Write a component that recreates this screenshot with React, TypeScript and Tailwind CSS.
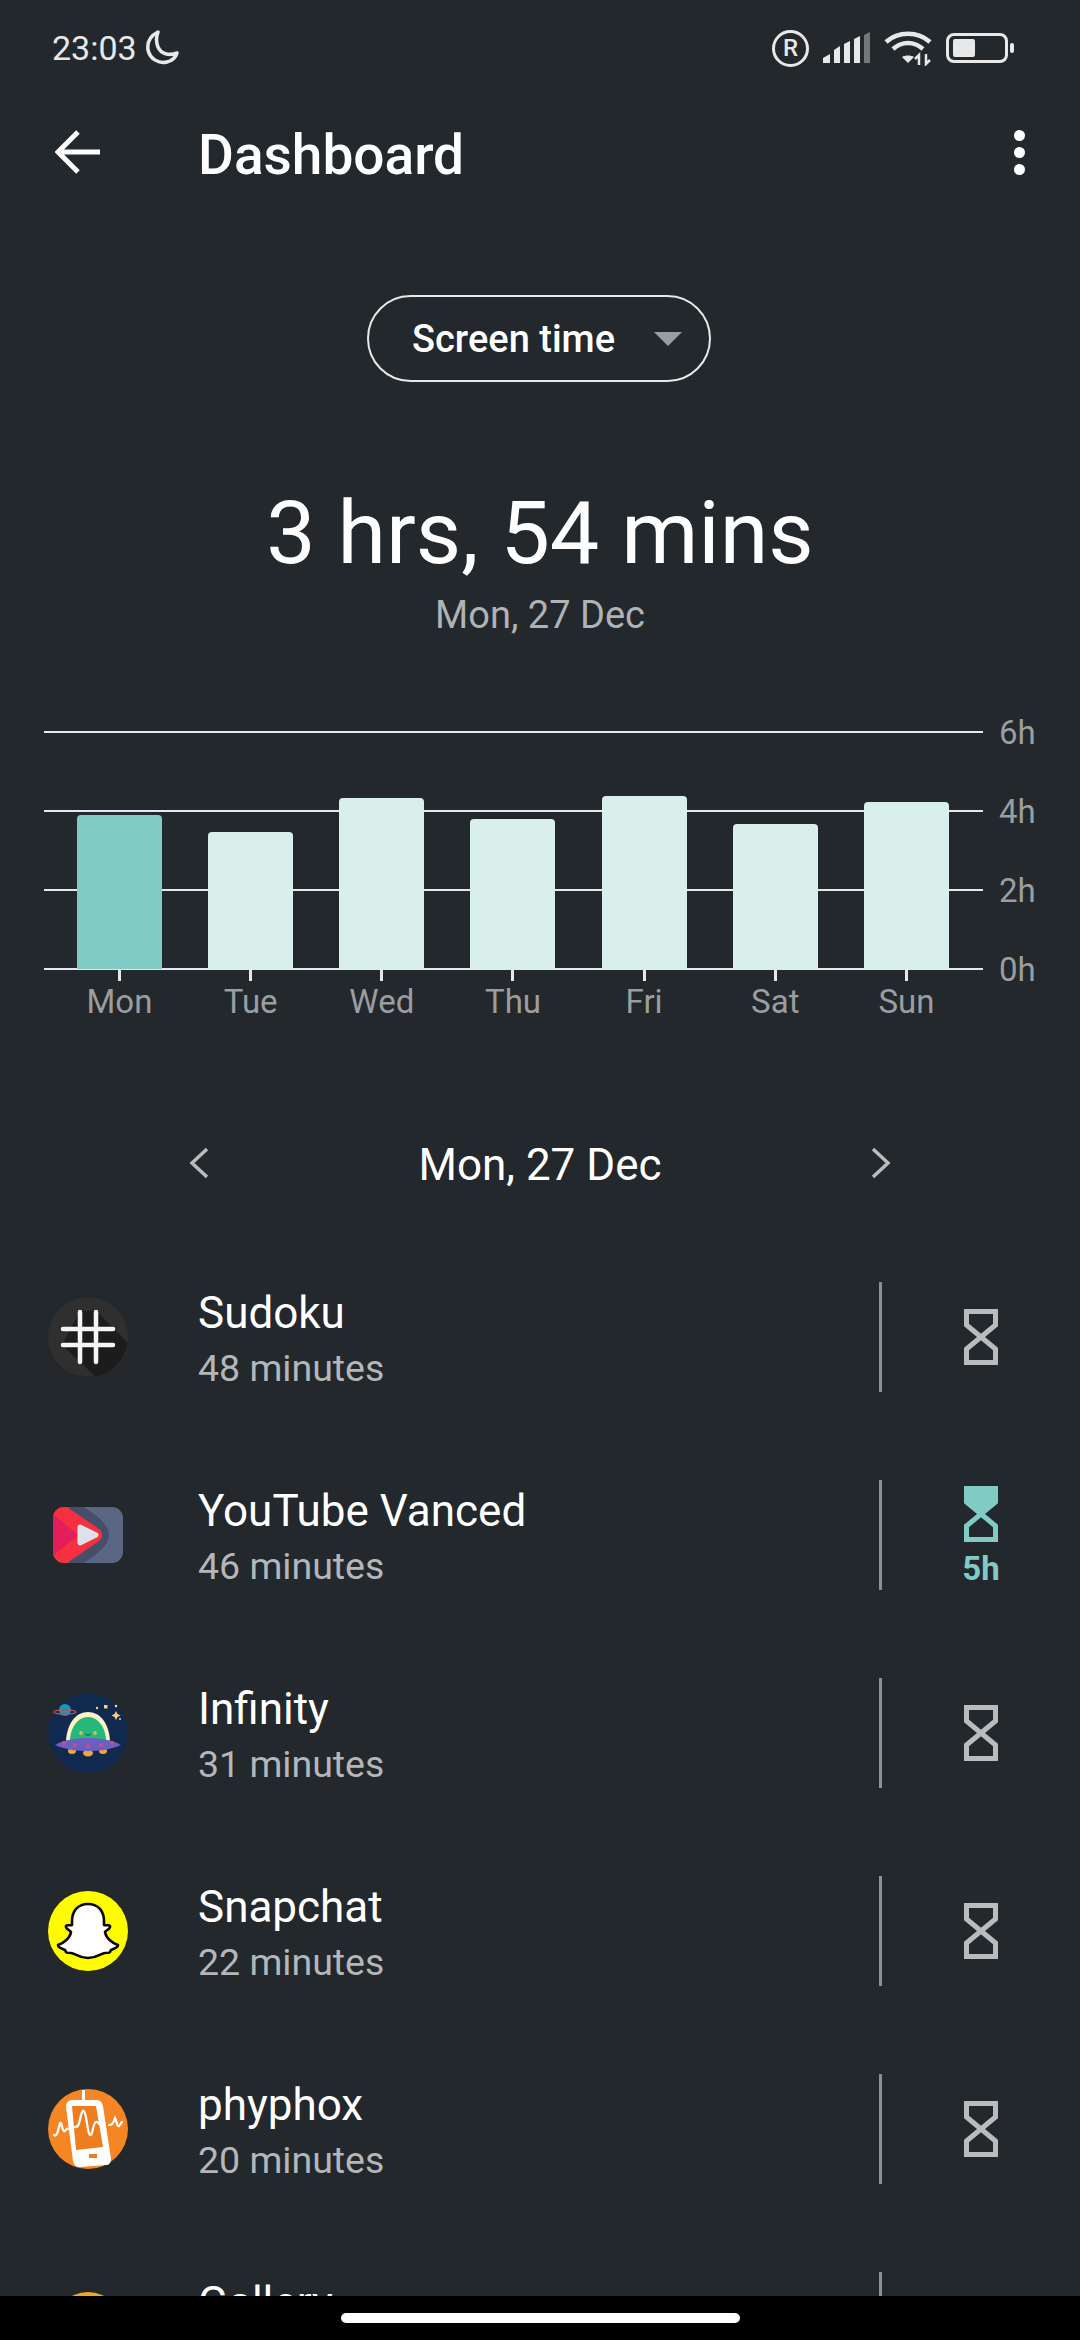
import type { ReactNode } from 'react';

const bars = [
  { day: 'Mon', height: 154, active: true },
  { day: 'Tue', height: 137 },
  { day: 'Wed', height: 171 },
  { day: 'Thu', height: 150 },
  { day: 'Fri', height: 173 },
  { day: 'Sat', height: 145 },
  { day: 'Sun', height: 167 },
];

function SudokuIcon() {
  return (
    <svg viewBox="0 0 80 80" className="h-20 w-20">
      <defs>
        <clipPath id="sudoku-clip">
          <circle cx="40" cy="40" r="40" />
        </clipPath>
      </defs>
      <circle cx="40" cy="40" r="40" fill="#2f2f30" />
      <path d="M32 14 L48 14 L80 46 L80 70 L48 80 L14 48 Z" fill="#1c1c1d" clipPath="url(#sudoku-clip)" />
      <path
        d="M32 15V65M48 15V65M15 32H65M15 48H65"
        stroke="#f5f5f5"
        strokeWidth="4.500"
        strokeLinecap="round"
        fill="none"
      />
    </svg>
  );
}

function VancedIcon() {
  return (
    <svg viewBox="0 0 70 56" className="h-14 w-[70px]">
      <defs>
        <clipPath id="vanced-clip">
          <rect width="70" height="56" rx="11" />
        </clipPath>
      </defs>
      <g clipPath="url(#vanced-clip)">
        <rect width="70" height="56" fill="#5a6684" />
        <path d="M16 0H30C44 8 56 18 56 28C56 38 44 48 30 56H16Z" fill="#454f69" />
        <path d="M0 0H14L46 22C50 25 50 31 46 34L14 56H0Z" fill="#f6303f" />
        <path d="M0 7L25 28L0 49Z" fill="#e21f5c" />
      </g>
      <path
        d="M27 20L43 28L27 36Z"
        fill="#dde1e8"
        stroke="#dde1e8"
        strokeWidth="5"
        strokeLinejoin="round"
      />
    </svg>
  );
}

function InfinityIcon() {
  return (
    <svg viewBox="0 0 80 80" className="h-20 w-20">
      <circle cx="40" cy="40" r="40" fill="#12294f" />
      <ellipse cx="17" cy="17" rx="6" ry="6" fill="#2b8fb0" />
      <ellipse cx="17" cy="19" rx="11" ry="2.2" fill="none" stroke="#b5545f" strokeWidth="1.2" />
      <path d="M68 18l1.5 3 3 1.500-3 1.500-1.500 3-1.500-3-3-1.500 3-1.500Z" fill="#f4d27a" />
      <rect x="56" y="12" width="3.500" height="3.500" fill="#f4d27a" />
      <circle cx="49" cy="15" r="1.200" fill="#f4d27a" />
      <circle cx="68" cy="13" r="1.200" fill="#f6e6b0" />
      <circle cx="72" cy="26" r="1" fill="#f4d27a" />
      <path d="M18 48C19 30 28 19 40 19C52 19 61 30 62 48Z" fill="#fbf3c4" />
      <path d="M22 48C22 36 29 24 40 24C51 24 58 36 58 48Z" fill="#25b87a" />
      <circle cx="33" cy="40" r="2" fill="#b7c84d" />
      <circle cx="47" cy="40" r="2" fill="#b7c84d" />
      <path d="M37 41Q40 44 43 41" stroke="#0f5a4a" strokeWidth="1" fill="none" />
      <ellipse cx="24" cy="58" rx="4" ry="3" fill="#f0a63a" />
      <ellipse cx="40" cy="60" rx="5" ry="3.500" fill="#f0a63a" />
      <ellipse cx="55" cy="58" rx="4" ry="3" fill="#f0a63a" />
      <path d="M7 52C16 47 26 45 40 45C54 45 64 47 73 52C62 57 50 58 40 58C30 58 18 57 7 52Z" fill="#6b5fc4" />
      <circle cx="16" cy="50" r="2" fill="#c0508f" />
      <circle cx="27" cy="52" r="2" fill="#c0508f" />
      <circle cx="40" cy="53" r="2" fill="#c0508f" />
      <circle cx="53" cy="52" r="2" fill="#c0508f" />
      <circle cx="64" cy="50" r="2" fill="#c0508f" />
    </svg>
  );
}

function SnapchatIcon() {
  return (
    <svg viewBox="0 0 80 80" className="h-20 w-20">
      <circle cx="40" cy="40" r="40" fill="#fffc00" />
      <path
        d="M40 13C51 13 56 21 56 30L56 34C58 35 61 33 62 35C63 38 58 39 57 41C58 47 64 52 70 54C70 57 65 58 63 59C62 62 61 62 57 62C53 62 50 67 40 67C30 67 27 62 23 62C19 62 18 62 17 59C15 58 10 57 10 54C16 52 22 47 23 41C22 39 17 38 18 35C19 33 22 35 24 34L24 30C24 21 29 13 40 13Z"
        fill="#ffffff"
        stroke="#0a0a0a"
        strokeWidth="2.600"
        strokeLinejoin="round"
      />
    </svg>
  );
}

function PhyphoxIcon() {
  return (
    <svg viewBox="0 0 80 80" className="h-20 w-20">
      <circle cx="40" cy="40" r="40" fill="#f68524" />
      <path d="M34 1H37V12H34Z" fill="#ffffff" />
      <path d="M24 11H48C52 11 54 13 55 17L63 70C63 74 61 76 58 76L32 78C28 78 26 76 25 72L18 18C18 14 20 11 24 11Z" fill="#ffffff" />
      <path d="M24 17H48L55 58L28 61Z" fill="#ee7d1f" />
      <path
        d="M26 38C30 39 31 36 33 26C35 20 36 20 38 28C40 42 41 47 43 46C45 44 45 34 48 33C50 32 52 37 54 37"
        stroke="#ffffff"
        strokeWidth="2.200"
        strokeLinejoin="round"
        strokeLinecap="round"
        fill="none"
      />
      <path
        d="M6 46C9 48 10 42 12 34C14 32 14 44 17 42C18 41 19 39 20 40"
        stroke="#ffffff"
        strokeWidth="2.200"
        strokeLinecap="round"
        fill="none"
      />
      <path
        d="M61 36C64 36 65 35 67 29C69 33 69 38 71 37C72 36 73 34 74 33"
        stroke="#ffffff"
        strokeWidth="2.200"
        strokeLinecap="round"
        fill="none"
      />
      <rect x="41" y="65" width="8" height="4" fill="#ee7d1f" />
    </svg>
  );
}

function GalleryIcon() {
  return (
    <svg viewBox="0 0 80 80" className="h-20 w-20">
      <circle cx="40" cy="40" r="35" fill="#f5a623" />
    </svg>
  );
}

function Hourglass({ active }: { active?: boolean }) {
  const color = active ? '#80cbc4' : '#b9bbbd';
  return (
    <svg viewBox="0 0 34 56" className="h-14 w-[34px]">
      {active && <path d="M2 2H32V16L17 28L2 16Z" fill={color} />}
      <path
        d="M2.500 2.500H31.500V16L2.500 40V53.500H31.500V40L2.500 16Z"
        fill="none"
        stroke={color}
        strokeWidth="5"
      />
    </svg>
  );
}

const apps: { name: string; time?: string; icon: ReactNode; limit?: string }[] = [
  { name: 'Sudoku', time: '48 minutes', icon: <SudokuIcon /> },
  { name: 'YouTube Vanced', time: '46 minutes', icon: <VancedIcon />, limit: '5h' },
  { name: 'Infinity', time: '31 minutes', icon: <InfinityIcon /> },
  { name: 'Snapchat', time: '22 minutes', icon: <SnapchatIcon /> },
  { name: 'phyphox', time: '20 minutes', icon: <PhyphoxIcon /> },
  { name: 'Gallery', icon: <GalleryIcon /> },
];

function StatusBar() {
  return (
    <div className="flex h-24 shrink-0 items-center pl-[52px] pr-[66px] text-[#e8e8e8]">
      <span className="text-[34px] leading-none">23:03</span>
      {/* Do not disturb */}
      <svg viewBox="0 0 34 36" className="ml-[8px] h-9 w-[34px]">
        <path
          d="M13 2C5 6 2 13 3 20C5 29 14 34 22 32C27 31 31 27 32 23C24 26 16 24 13 17C11 12 11 7 13 2Z"
          fill="none"
          stroke="#e8e8e8"
          strokeWidth="3.500"
          strokeLinejoin="round"
        />
      </svg>
      <div className="ml-auto flex items-center">
        <div className="flex h-[37px] w-[37px] items-center justify-center rounded-full border-[3px] border-[#e8e8e8] text-[24px] font-medium leading-none">
          R
        </div>
        {/* Signal */}
        <svg viewBox="0 0 48 32" className="ml-[14px] h-8 w-12">
          <path d="M0 26L7 22V31H0Z" fill="#e8e8e8" />
          <path d="M11 18L17 14V31H11Z" fill="#e8e8e8" />
          <path d="M21 12L27 9V31H21Z" fill="#e8e8e8" />
          <path d="M31 7L37 4V31H31Z" fill="#e8e8e8" />
          <path d="M41 3L47 0V31H41Z" fill="#747879" />
        </svg>
        {/* Wifi */}
        <svg viewBox="0 0 48 36" className="ml-[13px] h-9 w-12">
          <path d="M2 12C14 1 34 1 46 12" fill="none" stroke="#e8e8e8" strokeWidth="4.500" />
          <path d="M9 19C18 11 30 11 39 19" fill="none" stroke="#e8e8e8" strokeWidth="4.500" />
          <path d="M18 27C21 25 27 25 30 27L24 33Z" fill="#e8e8e8" />
          <path d="M35 35V25L31 29M42 24V34L46 30" fill="none" stroke="#e8e8e8" strokeWidth="2.500" />
        </svg>
        {/* Battery */}
        <div className="ml-[14px] flex items-center gap-[2px]">
          <div className="flex h-[30px] w-[62px] items-center rounded-[8px] border-[3px] border-[#e8e8e8] pl-1">
            <div className="h-[18px] w-[22px] rounded-[2px] bg-[#e8e8e8]" />
          </div>
          <div className="h-[10px] w-1 rounded-full bg-[#e8e8e8]" />
        </div>
      </div>
    </div>
  );
}

function Chart() {
  return (
    <div className="ml-11 mt-[95px] w-[992px]">
      <div className="relative h-[237px]">
        {/* Grid lines with their hour labels */}
        <div className="absolute inset-0 flex flex-col justify-between">
          {['6h', '4h', '2h', '0h'].map((label) => (
            <div key={label} className="flex h-0 items-center">
              <div className="h-[2px] w-[939px] bg-[#e8e8e8]" />
              <span className="ml-4 text-[33px] leading-none text-[#9b9d9f]">{label}</span>
            </div>
          ))}
        </div>
        <div className="absolute inset-0 flex items-end gap-[46.170px] pl-[33px]">
          {bars.map(({ day, height, active }) => (
            <div
              key={day}
              className={`w-[85px] rounded-t-[4px] ${active ? 'bg-[#80cbc4]' : 'bg-[#d9efec]'}`}
              style={{ height }}
            />
          ))}
        </div>
      </div>
      <div className="flex gap-[46.170px] pl-[33px]">
        {bars.map(({ day }) => (
          <div key={day} className="flex w-[85px] flex-col items-center">
            <div className="h-3 w-[3px] bg-[#e8e8e8]" />
            <span className="mt-[3px] text-[33px] leading-9 text-[#9b9d9f]">{day}</span>
          </div>
        ))}
      </div>
    </div>
  );
}

function AppRow({ name, time, icon, limit }: (typeof apps)[number]) {
  return (
    <div className="flex h-[198px] shrink-0 items-center pl-12">
      <div className="flex h-20 w-20 shrink-0 items-center justify-center">{icon}</div>
      <div className="ml-[70px] h-[106px] flex-1 pt-[3px]">
        <div className="text-[44px] leading-[52px] text-white">{name}</div>
        {time && <div className="mt-[7px] text-[37.500px] leading-[44px] text-[#b4b7b9]">{time}</div>}
      </div>
      <div className="h-[110px] w-[3px] bg-[#8e9193]" />
      <div className="flex w-[198px] flex-col items-center">
        <Hourglass active={!!limit} />
        {limit && <span className="mt-[10px] text-[33px] font-bold leading-[33px] text-[#80cbc4]">{limit}</span>}
      </div>
    </div>
  );
}

export default function App() {
  return (
    <div className="flex h-[2340px] w-[1080px] flex-col overflow-hidden bg-[#22282c] font-[Roboto,sans-serif] text-white">
      <div className="min-h-0 flex-1 overflow-hidden">
        <StatusBar />

        {/* Toolbar */}
        <div className="flex h-[118px] items-center pl-[55px] pr-[55px]">
          <svg viewBox="0 0 46 44" className="h-11 w-[46px] -translate-y-[3px]">
            <path d="M45 22H4M23 2L3 22L23 42" fill="none" stroke="#ffffff" strokeWidth="5" />
          </svg>
          <h1 className="ml-[97px] text-[55px] font-medium leading-none">Dashboard</h1>
          <div className="ml-auto flex -translate-y-[3px] flex-col gap-[6px]">
            <div className="h-[11px] w-[11px] rounded-full bg-white" />
            <div className="h-[11px] w-[11px] rounded-full bg-white" />
            <div className="h-[11px] w-[11px] rounded-full bg-white" />
          </div>
        </div>

        {/* Metric picker */}
        <div className="ml-[367px] mt-[81px] flex h-[87px] w-[344px] items-center rounded-full border-2 border-[#e8e8e8] pl-[43px]">
          <span className="text-[38px] font-medium leading-none">Screen time</span>
          <div className="ml-auto mr-[27px] h-0 w-0 border-x-[14px] border-t-[14px] border-x-transparent border-t-[#9a9da1]" />
        </div>

        <div className="mt-[101px] text-center text-[88px] leading-[100px]">3 hrs, 54 mins</div>
        <div className="mt-[10px] text-center text-[38px] leading-[44px] text-[#b0b3b5]">Mon, 27 Dec</div>

        <Chart />

        {/* Day switcher */}
        <div className="mx-[189px] mt-[115px] flex h-[60px] items-center justify-between">
          <svg viewBox="0 0 20 32" className="h-8 w-5 -translate-y-[2px]">
            <path d="M18 2L3 16L18 30" fill="none" stroke="#b9bbbd" strokeWidth="3.500" />
          </svg>
          <span className="text-[44px] leading-none">Mon, 27 Dec</span>
          <svg viewBox="0 0 20 32" className="h-8 w-5 -translate-y-[2px]">
            <path d="M2 2L17 16L2 30" fill="none" stroke="#b9bbbd" strokeWidth="3.500" />
          </svg>
        </div>

        <div className="mt-[43px]">
          {apps.map((app) => (
            <AppRow key={app.name} {...app} />
          ))}
        </div>
      </div>

      {/* Gesture bar */}
      <div className="flex h-11 shrink-0 items-start justify-center bg-black pt-[17px]">
        <div className="h-[10px] w-[399px] rounded-full bg-white" />
      </div>
    </div>
  );
}
